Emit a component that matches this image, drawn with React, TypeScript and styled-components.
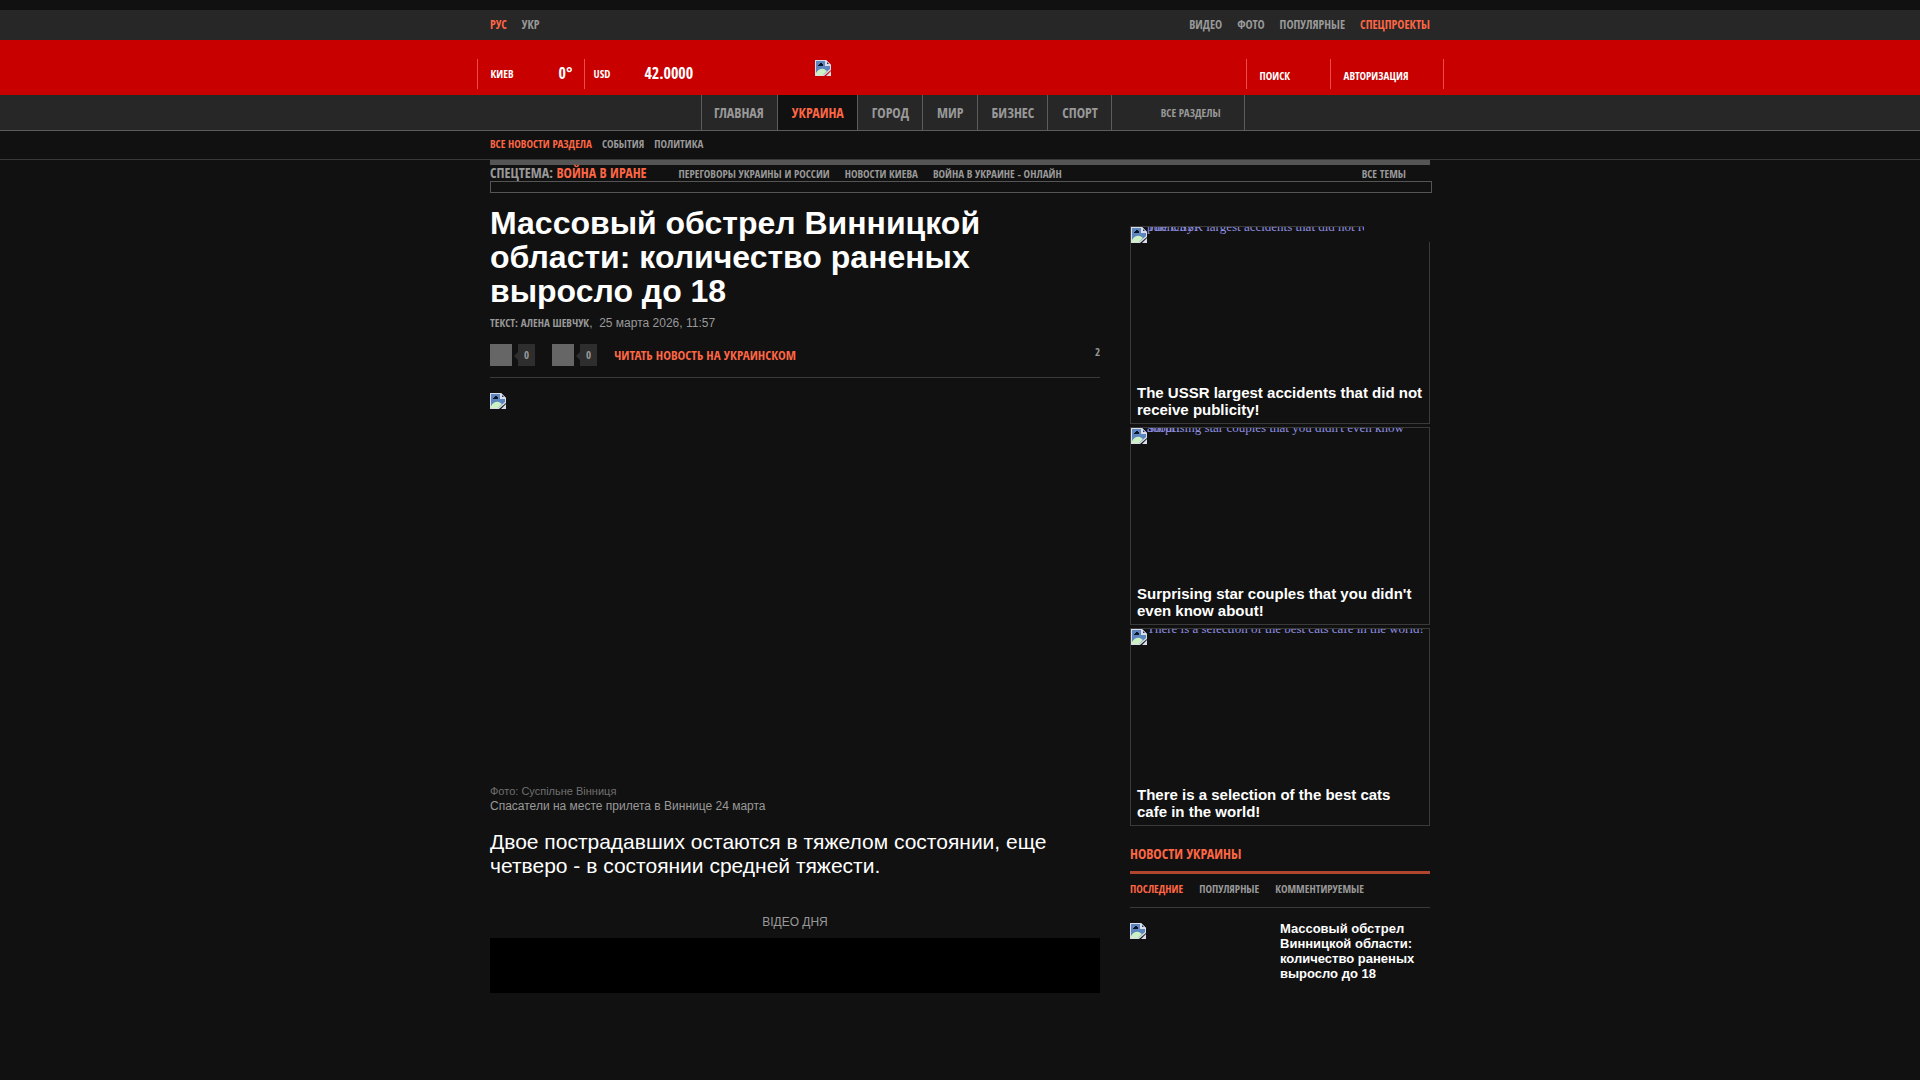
import React from 'react';
import styled, { createGlobalStyle } from 'styled-components';

const c = {
  page: '#111111',
  panel: '#272727',
  red: '#c80000',
  text: '#999999',
  accent: '#ff6644',
  line: '#3a3a3a',
};
const condensed = '"Open Sans Condensed", "Open Sans", sans-serif';
const sans = '"Liberation Sans", Arial, sans-serif';

const GlobalStyle = createGlobalStyle`
  * { box-sizing: border-box; }
  body { margin: 0; padding-top: 10px; background: ${c.page}; color: ${c.text}; font-family: ${sans}; }
  a { color: inherit; text-decoration: none; }
  h1, h2, h3, p, figure, ul { margin: 0; padding: 0; }
`;

const Container = styled.div`
  width: 100%;
  max-width: 940px;
  margin: 0 auto;
`;

const Links = styled.nav<{ $gap: number }>`
  display: flex;
  gap: ${p => p.$gap}px;
`;

const CapsLink = styled.a<{ $active?: boolean; $size?: number }>`
  font: 700 ${p => p.$size ?? 11}px/16px ${condensed};
  text-transform: uppercase;
  white-space: nowrap;
  color: ${p => (p.$active ? c.accent : c.text)};
`;

const TopBar = styled.div`
  background: ${c.panel};
  ${Container} {
    display: flex;
    justify-content: space-between;
    align-items: center;
    height: 30px;
  }
`;

const Header = styled.header`
  background: ${c.red};
  padding: 19px 0 6px;
`;

const HeaderRow = styled.div`
  display: grid;
  grid-template-columns: 107px 231px 431px 84px 114px;
  max-width: 967px;
  height: 30px;
  margin: 0 auto;
`;

const HeaderCell = styled.div<{ $pad?: number }>`
  display: flex;
  align-items: flex-start;
  padding: 5px 11px 0 ${p => p.$pad ?? 13}px;
  border-left: 1px solid #f04a4a;
  color: #fff;
  &:last-child { border-right: 1px solid #f04a4a; }
`;

const LogoLink = styled.a`
  padding-top: 1px;
`;

const Label = styled.span`
  font: 700 11px/20px ${condensed};
  text-transform: uppercase;
`;

const Value = styled.span<{ $left?: number }>`
  margin-left: ${p => (p.$left ? `${p.$left}px` : 'auto')};
  font: 700 16px/18px ${condensed};
`;

const HeaderButton = styled.button`
  padding: 0;
  border: 0;
  background: none;
  color: #fff;
  font: 700 11px/24px ${condensed};
  text-transform: uppercase;
  cursor: pointer;
`;

const MainNav = styled.nav`
  background: ${c.panel};
  border-bottom: 1px solid #5c5c5c;
  ${Container} {
    display: flex;
    height: 35px;
    padding-left: 211px;
  }
`;

const NavItem = styled.a<{ $active?: boolean }>`
  padding: 0 13px 0 14px;
  &:first-child { padding-left: 12px; }
  border-left: 1px solid #5c5c5c;
  background: ${p => (p.$active ? c.page : 'transparent')};
  color: ${p => (p.$active ? c.accent : c.text)};
  font: 700 14px/35px ${condensed};
  text-transform: uppercase;
`;

const AllSections = styled.button`
  padding: 0 23px 0 49px;
  border: solid #5c5c5c;
  border-width: 0 1px;
  background: none;
  color: ${c.text};
  font: 700 11px/35px ${condensed};
  text-transform: uppercase;
  cursor: pointer;
`;

const SubNav = styled.div`
  padding: 5px 0 7px;
  border-bottom: 1px solid #3a3a3a;
`;

const Topics = styled.div`
  display: flex;
  align-items: baseline;
  height: 21px;
  padding-right: 24px;
  border-top: 5px solid #555;
`;

const TopicTitle = styled.h2`
  margin-right: 32px;
  font: 700 14px/16px ${condensed};
  text-transform: uppercase;
  color: ${c.text};
`;

const AllTopics = styled(CapsLink)`
  margin-left: auto;
`;

const TopicFrame = styled.div`
  height: 12px;
  margin-right: -2px;
  border: 1px solid #555;
`;

const Columns = styled.div`
  display: grid;
  grid-template-columns: minmax(0, 610px) 300px;
  justify-content: space-between;
  padding-top: 13px;
`;

const Title = styled.h1`
  max-width: 520px;
  color: #fff;
  font: 700 32px/34px ${sans};
`;

const Byline = styled.div`
  margin-top: 6px;
  font: 400 12px/18px ${sans};
`;

const ActionRow = styled.div`
  display: flex;
  align-items: flex-start;
  height: 34px;
  margin-top: 12px;
  border-bottom: 1px solid ${c.line};
`;

const Share = styled.button`
  display: flex;
  align-items: center;
  margin-right: 17px;
  padding: 0;
  border: 0;
  background: none;
`;

const ShareIcon = styled.span`
  width: 22px;
  height: 22px;
  background: #666;
`;

const ShareCount = styled.span`
  position: relative;
  width: 17px;
  margin-left: 6px;
  background: #2e2e2e;
  color: ${c.text};
  font: 700 11px/22px ${condensed};
  text-align: center;
  &::before {
    content: '';
    position: absolute;
    left: -4px;
    top: 8px;
    border: solid transparent;
    border-width: 4px 4px 4px 0;
    border-right-color: #2e2e2e;
  }
`;

const ReadLink = styled(CapsLink)`
  line-height: 22px;
`;

const Comments = styled(CapsLink)`
  margin-left: auto;
`;

const Photo = styled.figure`
  margin-top: 15px;
`;

const PhotoFrame = styled.div`
  height: 391px;
`;

const Credit = styled.p`
  color: #707070;
  font: 400 11px/14px ${sans};
`;

const Caption = styled.figcaption`
  font: 400 12px/16px ${sans};
`;

const Lead = styled.p`
  margin-top: 16px;
  color: #fff;
  font: 400 21px/24px ${sans};
`;

const VideoTitle = styled.p`
  margin: 36px 0 8px;
  font: 400 12px/16px ${sans};
  text-align: center;
`;

const Video = styled.div`
  height: 55px;
  background: #000;
`;

const Sidebar = styled.aside`
  padding-top: 20px;
`;

const Card = styled.a`
  position: relative;
  display: flex;
  flex-direction: column;
  justify-content: space-between;
  height: 198px;
  margin-bottom: 3px;
  border: 1px solid ${c.line};
`;

const Alt = styled.span`
  display: flex;
  height: 16px;
  overflow: hidden;
`;

const AltText = styled.span`
  color: #8f8fe0;
  font: 400 13px/0 "Liberation Serif", serif;
  white-space: pre;
`;

const AdMark = styled.span`
  position: absolute;
  top: -1px;
  right: -1px;
  width: 66px;
  height: 16px;
  background: ${c.page};
`;

const CardTitle = styled.h3`
  padding: 0 6px 5px;
  color: #fff;
  font: 700 15px/17px ${sans};
`;

const NewsTitle = styled.h2`
  margin-top: 18px;
  padding-bottom: 7px;
  border-bottom: 3px solid #b0462f;
  color: ${c.accent};
  font: 700 14px/20px ${condensed};
  text-transform: uppercase;
`;

const Tabs = styled.div`
  display: flex;
  gap: 16px;
  padding: 6px 0 10px;
  border-bottom: 1px solid ${c.line};
`;

const Tab = styled.button<{ $active?: boolean }>`
  padding: 0;
  border: 0;
  background: none;
  color: ${p => (p.$active ? c.accent : c.text)};
  font: 700 11px/17px ${condensed};
  text-transform: uppercase;
  cursor: pointer;
`;

const NewsItem = styled.a`
  display: grid;
  grid-template-columns: 150px 1fr;
  padding-top: 13px;
`;

const Thumb = styled.span`
  padding-top: 2px;
`;

const NewsText = styled.h3`
  color: #fff;
  font: 700 13px/15px ${sans};
`;

const BrokenIcon = styled.svg`
  display: block;
  flex: none;
`;

function Broken() {
  return (
    <BrokenIcon width="16" height="16" viewBox="0 0 16 16" aria-hidden="true">
      <path d="M0 0H11L16 5V10L9 16H0Z" fill="#d8dde8" />
      <path d="M1 1H10V6H15V9L8 15H1Z" fill="#5c86bd" />
      <path d="M1 15V13Q4 8 9 9L12 11L8 15Z" fill="#cdf0c4" />
      <path d="M3 6V5H4V4H5V3H7V4H8V6Z" fill="#0b1424" />
      <path d="M11 0V5H16Z" fill="#d8dde8" />
      <path d="M12 2V4H14Z" fill="#25375a" />
      <path d="M16 11V16H11Z" fill="#d8dde8" />
    </BrokenIcon>
  );
}

const sections = ['Главная', 'Украина', 'Город', 'Мир', 'Бизнес', 'Спорт'];
const topics = ['Переговоры Украины и России', 'Новости Киева', 'Война в Украине - онлайн'];
const cards = [
  { title: 'The USSR largest accidents that did not receive publicity!', alt: 'The USSR largest accidents that did not receive\npublicity!', mark: true },
  { title: "Surprising star couples that you didn't even know about!", alt: "Surprising star couples that you didn't even know\nabout!" },
  { title: 'There is a selection of the best cats cafe in the world!', alt: 'There is a selection of the best cats cafe in the world!' },
];

export default function App() {
  return (
    <>
      <GlobalStyle />
      <TopBar>
        <Container>
          <Links $gap={15}>
            <CapsLink href="#" $size={12} $active>Рус</CapsLink>
            <CapsLink href="#" $size={12}>Укр</CapsLink>
          </Links>
          <Links $gap={15}>
            <CapsLink href="#" $size={12}>Видео</CapsLink>
            <CapsLink href="#" $size={12}>Фото</CapsLink>
            <CapsLink href="#" $size={12}>Популярные</CapsLink>
            <CapsLink href="#" $size={12} $active>Спецпроекты</CapsLink>
          </Links>
        </Container>
      </TopBar>
      <Header>
        <HeaderRow>
          <HeaderCell><Label>Киев</Label><Value>0°</Value></HeaderCell>
          <HeaderCell $pad={9}><Label>USD</Label><Value $left={34}>42.0000</Value></HeaderCell>
          <LogoLink href="#" aria-label="Главная"><Broken /></LogoLink>
          <HeaderCell><HeaderButton>Поиск</HeaderButton></HeaderCell>
          <HeaderCell><HeaderButton>Авторизация</HeaderButton></HeaderCell>
        </HeaderRow>
      </Header>
      <MainNav>
        <Container>
          {sections.map(s => <NavItem key={s} href="#" $active={s === 'Украина'}>{s}</NavItem>)}
          <AllSections>Все разделы</AllSections>
        </Container>
      </MainNav>
      <SubNav>
        <Container>
          <Links $gap={10}>
            <CapsLink href="#" $active>Все новости раздела</CapsLink>
            <CapsLink href="#">События</CapsLink>
            <CapsLink href="#">Политика</CapsLink>
          </Links>
        </Container>
      </SubNav>
      <Container>
        <Topics>
          <TopicTitle>Спецтема: <CapsLink href="#" $size={14} $active>Война в Иране</CapsLink></TopicTitle>
          <Links $gap={15}>
            {topics.map(t => <CapsLink key={t} href="#">{t}</CapsLink>)}
          </Links>
          <AllTopics href="#">Все темы</AllTopics>
        </Topics>
        <TopicFrame />
        <Columns>
          <main>
            <Title>Массовый обстрел Винницкой области: количество раненых выросло до 18</Title>
            <Byline><CapsLink href="#">Текст: Алена Шевчук</CapsLink>,&nbsp; 25 марта 2026, 11:57</Byline>
            <ActionRow>
              <Share aria-label="Facebook"><ShareIcon /><ShareCount>0</ShareCount></Share>
              <Share aria-label="Twitter"><ShareIcon /><ShareCount>0</ShareCount></Share>
              <ReadLink href="#" $size={13} $active>Читать новость на украинском</ReadLink>
              <Comments href="#">2</Comments>
            </ActionRow>
            <Photo>
              <PhotoFrame><Broken /></PhotoFrame>
              <Credit>Фото: Суспільне Вінниця</Credit>
              <Caption>Спасатели на месте прилета в Виннице 24 марта</Caption>
            </Photo>
            <Lead>Двое пострадавших остаются в тяжелом состоянии, еще четверо - в состоянии средней тяжести.</Lead>
            <VideoTitle>ВІДЕО ДНЯ</VideoTitle>
            <Video />
          </main>
          <Sidebar>
            {cards.map(card => (
              <Card key={card.title} href="#">
                <Alt><Broken /><AltText>{card.alt}</AltText></Alt>
                {card.mark && <AdMark />}
                <CardTitle>{card.title}</CardTitle>
              </Card>
            ))}
            <NewsTitle>Новости Украины</NewsTitle>
            <Tabs>
              <Tab $active>Последние</Tab>
              <Tab>Популярные</Tab>
              <Tab>Комментируемые</Tab>
            </Tabs>
            <NewsItem href="#">
              <Thumb><Broken /></Thumb>
              <NewsText>Массовый обстрел Винницкой области: количество раненых выросло до 18</NewsText>
            </NewsItem>
          </Sidebar>
        </Columns>
      </Container>
    </>
  );
}
